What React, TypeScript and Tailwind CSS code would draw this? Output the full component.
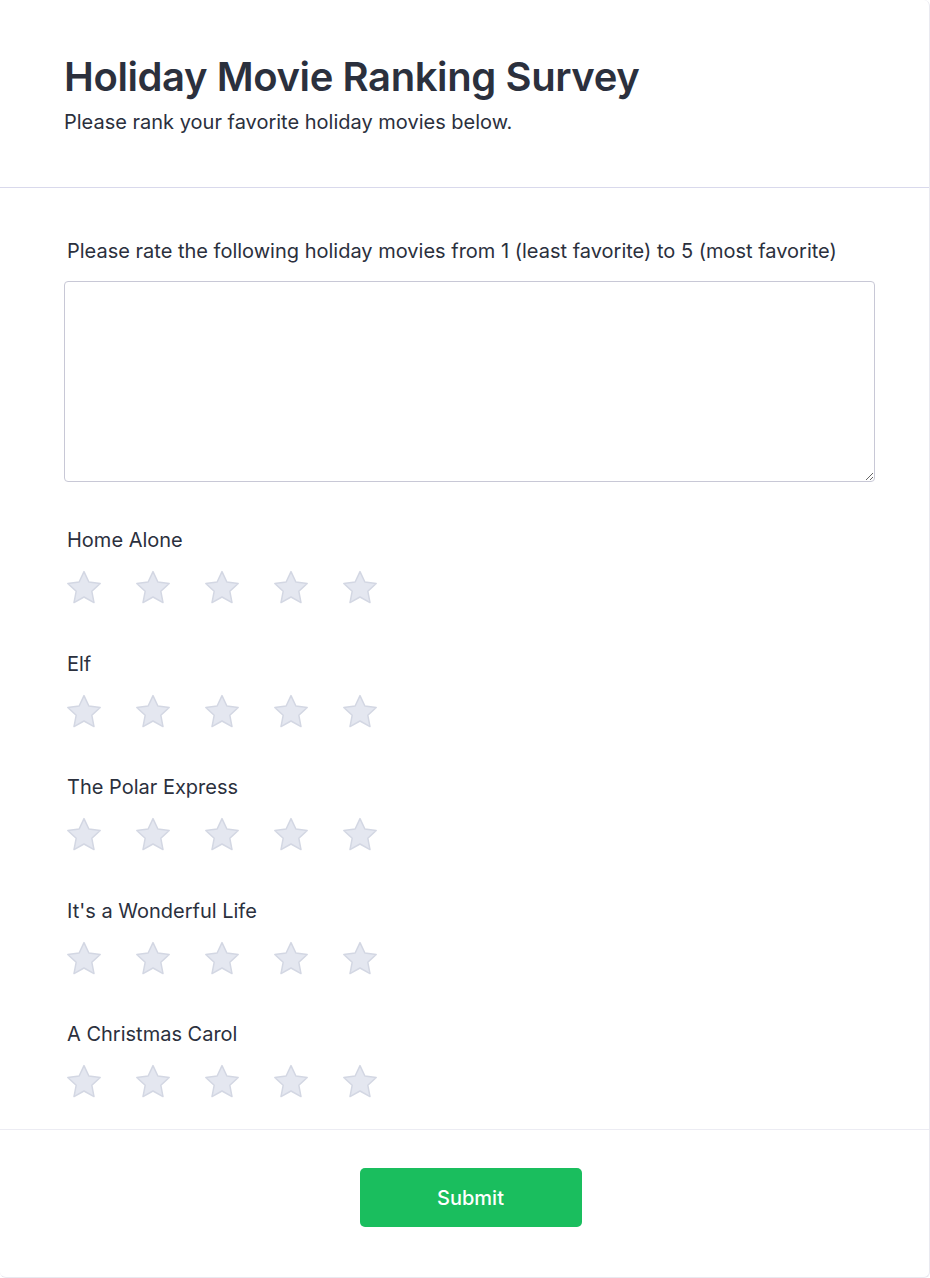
const movies = ["Home Alone", "Elf", "The Polar Express", "It's a Wonderful Life", "A Christmas Carol"];

function Star() {
  return (
    <svg width="40" height="38" viewBox="0 0 24 23" className="block">
      <path
        d="M12 1.6l2.95 6.3 6.85.85-5.05 4.75 1.3 6.8L12 16.95 5.95 20.3l1.3-6.8L2.2 8.75l6.85-.85z"
        fill="#e4e7f0"
        stroke="#d3d7e3"
        strokeWidth="0.9"
        strokeLinejoin="round"
      />
    </svg>
  );
}

export default function App() {
  return (
    <div className="w-[930px] h-[1278px] bg-white font-['Inter',sans-serif] text-[#2b303d]">
      <div className="h-full rounded-md border border-[#e9e9f0] border-l-0 border-t-0 flex flex-col">
        <header className="px-16 pt-[51px] h-[188px] border-b border-[#d9d9ec]">
          <h1 className="text-[40px] leading-[52px] font-semibold tracking-[-0.4px]">Holiday Movie Ranking Survey</h1>
          <p className="mt-[5px] text-[20px] leading-[28px] font-normal">Please rank your favorite holiday movies below.</p>
        </header>

        <main className="px-16 pt-[49px] h-[942px] border-b border-[#ececf3]">
          <label className="block pl-[3px] text-[20px] leading-[28px] font-normal">
            Please rate the following holiday movies from 1 (least favorite) to 5 (most favorite)
          </label>
          <textarea className="mt-[16px] block w-[811px] h-[201px] rounded border border-[#c8c8d6] bg-white" />

          <div className="mt-[44px] flex flex-col gap-[42.5px]">
            {movies.map((m) => (
              <div key={m}>
                <div className="pl-[3px] text-[20px] leading-[28px] font-normal">{m}</div>
                <div className="mt-[15px] flex gap-[29px]">
                  {[0, 1, 2, 3, 4].map((i) => (
                    <Star key={i} />
                  ))}
                </div>
              </div>
            ))}
          </div>
        </main>

        <footer className="flex justify-center pt-[38px] pl-[12px]">
          <button className="w-[222px] h-[59px] rounded-[5px] bg-[#1abe5e] text-white text-[20px] font-medium">
            Submit
          </button>
        </footer>
      </div>
    </div>
  );
}
